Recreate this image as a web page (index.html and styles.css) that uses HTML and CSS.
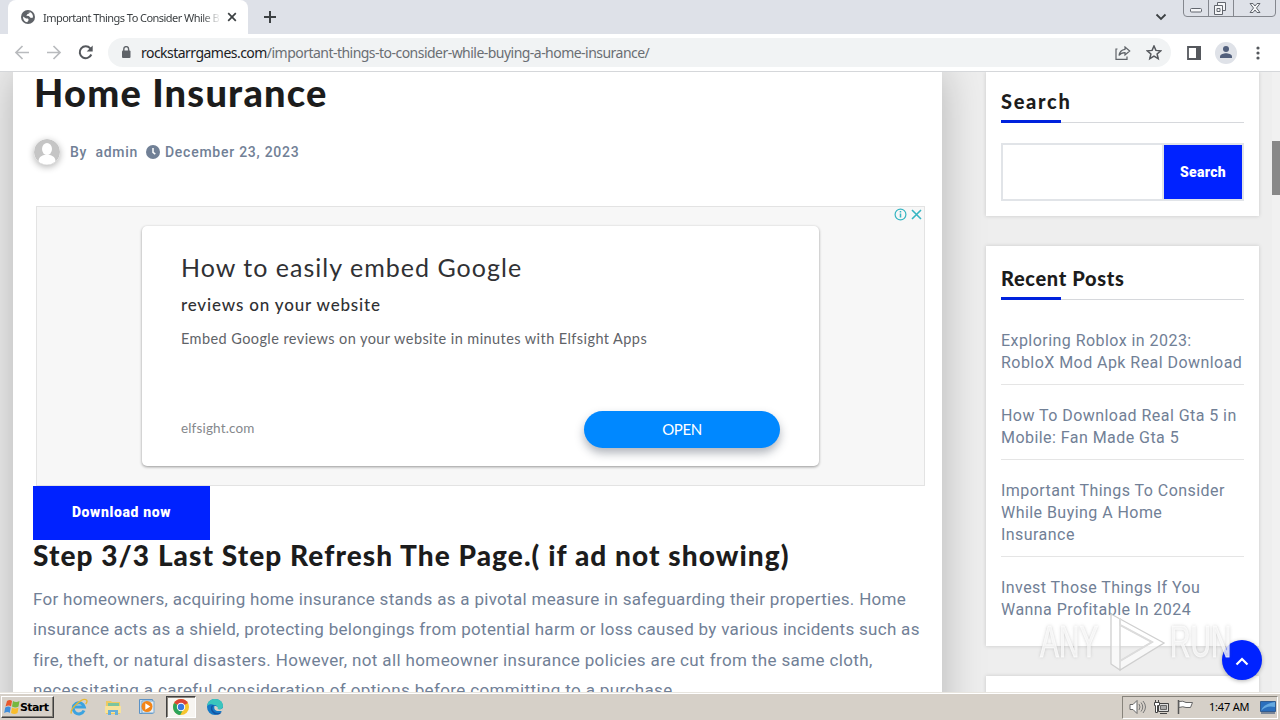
FILE: index.html
```
<!DOCTYPE html>
<html lang="en">
<head>
    <meta charset="UTF-8">
    <meta name="viewport" content="width=device-width, initial-scale=1.0">
    <title>Important Things To Consider While Buying A Home Insurance</title>
    <link rel="stylesheet" href="styles.css">
</head>
<body>
    <!-- Browser tabs -->
    <header class="tab-bar">
        <div class="tab">
            <svg class="tab-icon" width="14" height="14" viewBox="0 0 14 14"><circle cx="7" cy="7" r="7" fill="#5f6368"/><path d="M2 6.500L5 8.400h2l.7 1.700-1.500 2.200C3.700 12 1.900 10 2 6.500zM5.200 2.200l3.500-.5c.2 1.300-.8 2.100-2.200 2.300L5.300 5.700l2.500.4 2 2 2.200-.7c.3-3-1.500-5.100-3.600-5.500" fill="#fff"/></svg>
            <span class="tab-title">Important Things To Consider While B</span>
            <svg class="tab-close" width="10" height="10" viewBox="0 0 10 10"><path d="M1.200 1.200l7.600 7.600M8.800 1.200L1.200 8.800" stroke="#3c4043" stroke-width="1.700"/></svg>
        </div>
        <svg class="new-tab" width="12" height="12" viewBox="0 0 12 12"><path d="M6 0v12M0 6h12" stroke="#3c4043" stroke-width="2"/></svg>
        <svg class="tab-search" width="12" height="8" viewBox="0 0 12 8"><path d="M1.500 1.500L6 6l4.500-4.500" fill="none" stroke="#3c4043" stroke-width="1.800"/></svg>
        <svg class="window-buttons" width="94" height="18" viewBox="0 0 94 18">
            <path d="M.5 0v13q0 3.500 3.500 3.500h85q3.500 0 3.500-3.500V0M25.500 0v16M50.500 0v16" fill="none" stroke="#84878e"/>
            <g fill="#f5f6f8" stroke="#62666e">
                <rect x="7.500" y="8.500" width="11" height="3.500" rx="1"/>
                <path d="M34.500 2.500h8v8h-8z"/>
                <path d="M31.500 5.500h8v9h-8zM34 8.500h3v3h-3z"/>
                <path d="M67 3.500h3l2 2.500 2-2.500h3L73.500 8l3.500 4.500h-3L72 10l-2 2.500h-3L70.500 8z"/>
            </g>
        </svg>
    </header>

    <!-- Address bar -->
    <nav class="toolbar">
        <svg class="nav-icon" width="16" height="16" viewBox="0 0 16 16"><path d="M15 7.500H2M8.500 1L2 7.500 8.500 14" fill="none" stroke="#b9bbbe" stroke-width="1.700"/></svg>
        <svg class="nav-icon" width="16" height="16" viewBox="0 0 16 16"><path d="M1 7.500h13M7.500 1L14 7.500 7.500 14" fill="none" stroke="#b9bbbe" stroke-width="1.700"/></svg>
        <svg class="nav-icon" width="16" height="16" viewBox="0 0 16 16"><path d="M13.300 9.500A6 6 0 1 1 12.300 3.300L13.500 4.500" fill="none" stroke="#55585d" stroke-width="2"/><path d="M14.700.5v6H8.700z" fill="#55585d"/></svg>
        <div class="address">
            <svg width="10" height="13" viewBox="0 0 10 13"><rect x="1" y="4.500" width="8.500" height="7.500" rx="1" fill="#5f6368"/><path d="M2.800 5V3a2.400 2.400 0 0 1 4.800 0v2" fill="none" stroke="#5f6368" stroke-width="1.400"/></svg>
            <span class="url"><b>rockstarrgames.com</b>/important-things-to-consider-while-buying-a-home-insurance/</span>
            <svg class="share" width="16" height="14" viewBox="0 0 16 14"><path d="M2.500 3H1v10.300h11V10.500" fill="none" stroke="#5f6368" stroke-width="1.200"/><path d="M10 1l4.700 4L10 9V6.600C7 6.600 5.200 7.600 4 9.500 4.500 6 6.500 3.700 10 3.300z" fill="none" stroke="#5f6368" stroke-width="1.200"/></svg>
            <svg width="16" height="16" viewBox="0 0 16 16"><path d="M8 1l1.900 4.400 4.800.4-3.600 3.200 1.100 4.700L8 11.200l-4.200 2.500L4.900 9 1.300 5.800l4.800-.4z" fill="none" stroke="#55585d" stroke-width="1.500"/></svg>
        </div>
        <svg class="panel-icon" width="14" height="14" viewBox="0 0 14 14"><path d="M1 1h12v12H1z" fill="#fff" stroke="#55585d" stroke-width="1.800"/><path d="M9 0h5v14H9z" fill="#55585d"/></svg>
        <svg class="profile" width="22" height="22" viewBox="0 0 22 22"><circle cx="11" cy="11" r="11" fill="#dfe2e8"/><circle cx="11" cy="7" r="3" fill="#515f7c"/><path d="M5 16v-1.500c0-2.300 4-3.300 6-3.300s6 1 6 3.300V16z" fill="#515f7c"/></svg>
        <svg class="menu-icon" width="4" height="14" viewBox="0 0 4 14"><g fill="#55585d"><circle cx="2" cy="2" r="1.600"/><circle cx="2" cy="7" r="1.600"/><circle cx="2" cy="12" r="1.600"/></g></svg>
    </nav>

    <!-- Page content -->
    <main class="page">
        <article class="post">
            <h1 class="post-title">Home Insurance</h1>
            <div class="post-meta">
                <svg class="avatar" width="26" height="26" viewBox="0 0 26 26"><circle cx="13" cy="13" r="13" fill="#c5c5c5"/><ellipse cx="13" cy="10" rx="5" ry="6" fill="#fff"/><path d="M4.500 22.500c0-5 4.500-7 8.500-7s8.500 2 8.500 7a13 13 0 0 1-17 0z" fill="#fff"/></svg>
                <span class="author">By&nbsp; admin</span>
                <svg class="clock" width="14" height="14" viewBox="0 0 14 14"><circle cx="7" cy="7" r="7" fill="#718096"/><path d="M7 3v4.300l2.300 1.800" fill="none" stroke="#fff" stroke-width="1.500"/></svg>
                <span class="date">December 23, 2023</span>
            </div>

            <section class="ad">
                <div class="ad-choices">
                    <svg width="13" height="13" viewBox="0 0 13 13"><circle cx="6.500" cy="6.500" r="5.400" fill="none" stroke="#36b5c2" stroke-width="1.200"/><path d="M6.500 5.500v4M6.500 3v1.500" stroke="#36b5c2" stroke-width="1.500"/></svg>
                    <svg width="11" height="11" viewBox="0 0 11 11"><path d="M1 1l9 9M10 1l-9 9" stroke="#36b5c2" stroke-width="1.600"/></svg>
                </div>
                <div class="ad-card">
                    <div class="ad-title">How to easily embed Google</div>
                    <div class="ad-subtitle">reviews on your website</div>
                    <div class="ad-text">Embed Google reviews on your website in minutes with Elfsight Apps</div>
                    <div class="ad-footer">
                        <span class="ad-domain">elfsight.com</span>
                        <button class="ad-open">OPEN</button>
                    </div>
                </div>
            </section>

            <button class="download">Download now</button>
            <h2 class="step-title">Step 3/3 Last Step Refresh The Page.( if ad not showing)</h2>
            <p class="post-text">For homeowners, acquiring home insurance stands as a pivotal measure in safeguarding their properties. Home<br>
            insurance acts as a shield, protecting belongings from potential harm or loss caused by various incidents such as<br>
            <span class="loose">fire, theft, or natural disasters. However, not all homeowner insurance policies are cut from the same cloth,<br>
            necessitating a careful consideration of options before committing to a purchase.</span></p>
        </article>

        <aside class="sidebar">
            <section class="widget search-widget">
                <h3 class="widget-title search-title">Search</h3>
                <div class="search-form">
                    <input class="search-input" type="text">
                    <button class="search-button">Search</button>
                </div>
            </section>
            <section class="widget recent-widget">
                <h3 class="widget-title">Recent Posts</h3>
                <ul class="recent-list">
                    <li>Exploring Roblox in 2023:<br>RobloX Mod Apk Real Download</li>
                    <li>How To Download Real Gta 5 in<br>Mobile: Fan Made Gta 5</li>
                    <li>Important Things To Consider<br>While Buying A Home<br>Insurance</li>
                    <li>Invest Those Things If You<br>Wanna Profitable In 2024</li>
                </ul>
            </section>
            <section class="widget next-widget"></section>
        </aside>

        <div class="scrollbar"><div class="thumb"></div></div>
        <button class="to-top"><svg width="14" height="9" viewBox="0 0 14 9"><path d="M1.500 7.500L7 2l5.500 5.500" fill="none" stroke="#fff" stroke-width="2.200"/></svg></button>
        <div class="watermark">
            <span>ANY</span>
            <svg width="58" height="62" viewBox="0 0 58 62"><path d="M3 3v50l9 6V14l32 17-32 19v9l44-27z" fill="#fff" fill-opacity=".6" stroke="#cfcfcf" stroke-width="1.300"/><path d="M12 7v7l32 17-32 19" fill="none" stroke="#dcdcdc" stroke-width="2"/></svg>
            <span>RUN</span>
        </div>
    </main>

    <!-- Windows taskbar -->
    <footer class="taskbar">
        <button class="start">
            <svg width="16" height="16" viewBox="0 0 16 16"><path d="M3 2q3-2 5 0L7 7.500Q5 5.500 1.500 7.500z" fill="#e8582c"/><path d="M9 2q3 2 6.500 0l-1 5.500q-3 2-6.500 0z" fill="#76b83f"/><path d="M1.200 8.500q3.500-2 5.500 0l-1 5.500q-2-2-5.500 0z" fill="#3f8edb"/><path d="M8 8.500q3 2 6.500 0l-1 5.500q-3 2-6.500 0z" fill="#f8bd2c"/></svg>
            Start
        </button>
        <div class="task-icon"><svg width="18" height="18" viewBox="0 0 18 18"><path d="M14 12.500A5.600 5.600 0 1 1 14.300 9H5" fill="none" stroke="#3ba3e0" stroke-width="3"/><path d="M1.500 15.500C-1 12 12-1 16.500 2c1 1 0 3-.8 4" fill="none" stroke="#e8b830" stroke-width="1.300"/></svg></div>
        <div class="task-icon"><svg width="18" height="18" viewBox="0 0 18 18"><path d="M2 3h5l1 1h8v12H2z" fill="#edca62"/><path d="M4 5h11v4H4z" fill="#7bc49f"/><path d="M1 8h16v7H1z" fill="#f7e29a"/><path d="M4 17v-5h10v5h-3v-3H7v3z" fill="#68afd8"/></svg></div>
        <div class="task-icon"><svg width="18" height="18" viewBox="0 0 18 18"><path d="M1.500 1.500h13v14h-13z" fill="#c4dcf0" stroke="#5b92c6"/><path d="M4 3h12v12H4z" fill="#e5eef5" stroke="#79a7cd"/><circle cx="9" cy="8.500" r="5.500" fill="#f28518"/><path d="M7.300 5.300l5 3.200-5 3.200z" fill="#fff"/></svg></div>
        <div class="task-icon active"><svg width="18" height="18" viewBox="0 0 18 18"><circle cx="9" cy="9" r="8" fill="#f6c52e"/><path d="M9 9L2.100 5A8 8 0 0 1 15.900 5z" fill="#dc4437"/><path d="M9 9L2.100 5A8 8 0 0 0 8.200 17l3.500-6.500z" fill="#2da45a"/><circle cx="9" cy="9" r="4.200" fill="#fff"/><circle cx="9" cy="9" r="3.200" fill="#3978e0"/></svg></div>
        <div class="task-icon"><svg width="18" height="18" viewBox="0 0 18 18"><circle cx="9" cy="9" r="8" fill="#1579c6"/><path d="M1 8C2 3 5 1 9 1c5 0 8 3 8 7 0 3-3 4-6 3 1-2 0-4-3-4-2-1-5-1-7 1z" fill="#3ac5bd"/><path d="M8 7c-3 2-2 7 3 8 2 .3 4-.3 5-1l-2 2C9 18 4 14 5 9c.5-1.500 2-2 3-2z" fill="#1353a2"/><path d="M8.500 8c-1 3 1 5 4 5h4l1-4c-1 2-3 3-6 2 1-1 0-3-3-3z" fill="#d8d2c8"/></svg></div>
        <div class="tray">
            <svg width="17" height="16" viewBox="0 0 17 16"><path d="M1 5.500h3l4-4v13l-4-4H1z" fill="#fff" stroke="#666"/><path d="M10 5q2 3 0 6M12 3.500q3.500 4.500 0 9M14 2q5 6 0 12" fill="none" stroke="#777"/></svg>
            <svg width="17" height="16" viewBox="0 0 17 16"><path d="M5.500 4.500h10v8h-10zM7 14.500h7" fill="#ddd" stroke="#444"/><path d="M7.500 6.500h6v4h-6z" fill="#aaa" stroke="#666"/><path d="M1.500 3.500h5v3h-2v7h-2v-7h-1zM2.500 1v3M5.500 1v3" fill="#fff" stroke="#444"/></svg>
            <svg width="17" height="16" viewBox="0 0 17 16"><path d="M1.500 1v14" stroke="#555" stroke-width="1.500"/><path d="M2 2.500q4-1 7 1h6.500l-2 5H9q-3-1.500-7 0z" fill="#fff" stroke="#666"/></svg>
            <span class="time">1:47 AM</span>
            <svg class="desktop-icon" width="16" height="13" viewBox="0 0 16 13"><path d="M.5.500h15v10h-15z" fill="#2b6fbd" stroke="#315c91"/><path d="M1 10Q3 3 15 1v5Q6 4 1 10z" fill="#65a9e0"/><path d="M1 12h14" stroke="#1d3c69"/></svg>
        </div>
    </footer>
</body>
</html>
```
FILE: styles.css
```
/* styles.css */

* {
    box-sizing: border-box;
}

body {
    display: flex;
    flex-direction: column;
    width: 1280px;
    height: 720px;
    margin: 0;
    overflow: hidden;
    font-family: Roboto, sans-serif;
    white-space: nowrap;
}

svg {
    display: block;
    flex-shrink: 0;
}

button {
    border: 0;
    padding: 0;
    font-family: inherit;
}

/* Browser window */
.tab-bar {
    display: flex;
    height: 34px;
    background-color: #dee1e8;
    padding-left: 8px;
}

.tab {
    display: flex;
    align-items: center;
    width: 240px;
    padding: 0 11px 0 13px;
    background-color: #fff;
    border-radius: 8px 8px 0 0;
}

.tab-title {
    width: 178px;
    margin-left: 8px;
    overflow: hidden;
    font-family: "Noto Sans", sans-serif;
    font-size: 11px;
    letter-spacing: -0.55px;
    color: #3c4043;
    -webkit-mask-image: linear-gradient(to right, #000 158px, transparent 178px);
    mask-image: linear-gradient(to right, #000 158px, transparent 178px);
}

.tab-close {
    margin-left: auto;
}

.new-tab {
    margin: 11px 0 0 16px;
}

.tab-search {
    margin: 13px 16px 0 auto;
}

.window-buttons {
    margin-right: 3px;
}

.toolbar {
    display: flex;
    align-items: center;
    height: 38px;
    padding-left: 14px;
    background-color: #fff;
    border-bottom: 1px solid #d5d7da;
}

.nav-icon {
    margin-right: 16px;
}

.address {
    display: flex;
    align-items: center;
    width: 1063px;
    height: 29px;
    margin-left: -2px;
    padding: 0 9px 0 13px;
    background-color: #f1f3f4;
    border-radius: 15px;
}

.url {
    margin-left: 10px;
    font-family: "Noto Sans", sans-serif;
    font-size: 14px;
    letter-spacing: -0.53px;
    color: #6a6e73;
}

.url b {
    font-weight: 400;
    color: #202124;
}

.share {
    margin: 0 15px 0 auto;
}

.panel-icon {
    margin-left: 16px;
}

.profile {
    margin: 0 19px 0 14px;
}

/* Page */
.page {
    position: relative;
    display: flex;
    height: 620px;
    padding-left: 13px;
    overflow: hidden;
    background-color: #eee;
}

.post {
    width: 929px;
    height: 700px;
    padding: 0 17px 0 20px;
    background-color: #fff;
    box-shadow: 0 0 40px rgba(0, 0, 0, 0.25);
}

.post-title {
    height: 66px;
    margin: 0 0 0 1px;
    font-family: Lato, sans-serif;
    font-size: 38px;
    line-height: 40px;
    font-weight: 900;
    letter-spacing: 1.2px;
    color: #1c1c1c;
}

.post-meta {
    display: flex;
    align-items: center;
    height: 28px;
    padding-bottom: 1px;
    font-size: 14px;
    font-weight: 500;
    color: #718096;
}

.avatar {
    margin-left: 1px;
    border-radius: 50%;
    box-shadow: 0 2px 7px rgba(0, 0, 0, 0.3);
}

.author {
    margin-left: 10px;
    letter-spacing: 0.7px;
}

.clock {
    margin: 0 5px 0 8px;
}

.date {
    letter-spacing: 0.75px;
}

.ad {
    width: 889px;
    height: 280px;
    margin: 40px 0 0 3px;
    background-color: #f7f7f7;
    border: 1px solid #e3e3e3;
}

.ad-choices {
    display: flex;
    justify-content: flex-end;
    align-items: center;
    gap: 4px;
    height: 14px;
    padding-right: 2px;
}

.ad-card {
    width: 677px;
    height: 240px;
    margin: 5px 0 0 105px;
    padding: 24px 39px 0;
    background-color: #fff;
    border-radius: 5px;
    box-shadow: 0 1px 3px rgba(0, 0, 0, 0.4);
    font-family: Lato, sans-serif;
    color: #5f6368;
}

.ad-title {
    height: 40px;
    font-size: 25px;
    line-height: 34px;
    letter-spacing: 1.02px;
    color: #303134;
}

.ad-subtitle {
    height: 33px;
    font-size: 17px;
    line-height: 30px;
    font-weight: 500;
    letter-spacing: 0.83px;
    color: #303134;
}

.ad-text {
    height: 88px;
    font-size: 14.5px;
    line-height: 32px;
    letter-spacing: 0.42px;
}

.ad-footer {
    display: flex;
    justify-content: space-between;
    align-items: center;
}

.ad-domain {
    padding-bottom: 3px;
    font-size: 13.500px;
    letter-spacing: 0.15px;
    color: #85888c;
}

.ad-open {
    width: 196px;
    height: 37px;
    padding-bottom: 2px;
    background-color: #0088ff;
    border-radius: 19px;
    box-shadow: 0 5px 10px rgba(30, 40, 60, 0.35);
    font-family: Lato, sans-serif;
    font-size: 15px;
    letter-spacing: -0.4px;
    color: #fff;
}

.download {
    display: block;
    width: 177px;
    height: 54px;
    padding-bottom: 2px;
    background-color: #0022ff;
    font-size: 14px;
    font-weight: 900;
    letter-spacing: 0.65px;
    color: #fff;
}

.step-title {
    height: 44px;
    margin: 0;
    font-family: Lato, sans-serif;
    font-size: 28px;
    line-height: 31px;
    font-weight: 900;
    letter-spacing: 1.07px;
    color: #1c1c1c;
}

.post-text {
    margin: 0;
    font-size: 17px;
    line-height: 30.4px;
    letter-spacing: 0.3px;
    color: #718096;
}

.loose {
    letter-spacing: 0.37px;
}

/* Sidebar */
.sidebar {
    width: 273px;
    margin-left: 44px;
    position: relative;
}

.widget {
    padding: 0 15px;
    background-color: #fff;
    box-shadow: 0 0 4px rgba(0, 0, 0, 0.16);
}

.search-widget {
    height: 144px;
    padding-top: 13px;
}

.recent-widget {
    height: 400px;
    margin-top: 30px;
    padding-top: 16px;
}

.next-widget {
    height: 100px;
    margin-top: 30px;
}

.widget-title {
    height: 38px;
    margin: 0;
    background:
        linear-gradient(#0022dd, #0022dd) left bottom / 60px 3px no-repeat,
        linear-gradient(#d6d8dc, #d6d8dc) left bottom / 100% 1px no-repeat;
    font-family: Lato, sans-serif;
    font-size: 20px;
    line-height: 33px;
    font-weight: 900;
    letter-spacing: 0.65px;
    color: #1c1c1c;
}

.search-title {
    letter-spacing: 1.7px;
}

.search-form {
    display: flex;
    height: 58px;
    margin-top: 20px;
    border: 2px solid #e1e4e8;
}

.search-input {
    width: 161px;
    border: 0;
    border-right: 2px solid #e1e4e8;
}

.search-button {
    flex: 1;
    padding-bottom: 1px;
    background-color: #0022ff;
    font-size: 14px;
    font-weight: 900;
    letter-spacing: 0.3px;
    color: #fff;
}

.recent-list {
    margin: 19px 0 0;
    padding: 0;
    list-style: none;
    font-size: 16px;
    line-height: 22px;
    letter-spacing: 0.45px;
    color: #718096;
}

.recent-list li {
    padding: 11px 0 10px;
    margin-bottom: 9px;
    border-bottom: 1px solid #e5e5e5;
}

.recent-list li:last-child {
    border-bottom: 0;
}

.scrollbar {
    width: 8px;
    margin-left: 13px;
    padding-top: 69px;
    background-color: #f1f1f1;
}

.thumb {
    height: 54px;
    background-color: #888;
}

/* Floating elements */
.to-top {
    position: absolute;
    right: 18px;
    bottom: 12px;
    display: flex;
    align-items: center;
    justify-content: center;
    width: 40px;
    height: 40px;
    padding-top: 3px;
    background-color: #0022ff;
    border-radius: 50%;
    box-shadow: 0 1px 4px rgba(0, 0, 0, 0.3);
}

.watermark {
    position: absolute;
    right: 46px;
    bottom: 19px;
    display: flex;
    align-items: center;
    gap: 4px;
    font-family: "Liberation Sans", sans-serif;
    font-size: 45px;
    line-height: 62px;
    color: rgba(255, 255, 255, 0.75);
    text-shadow: 0 0 4px rgba(100, 100, 100, 0.4);
}

.watermark span {
    width: 64px;
    transform: scaleX(0.63);
    transform-origin: left;
    -webkit-text-stroke: 1px rgba(255, 255, 255, 0.7);
}

/* Taskbar */
.taskbar {
    display: flex;
    align-items: center;
    height: 28px;
    padding: 2px 2px 0 1px;
    background-color: #d6d0c8;
    box-shadow: inset 0 1px #e8e5df, inset 0 2px #fff;
}

.start {
    display: flex;
    align-items: center;
    width: 53px;
    height: 22px;
    margin-right: 10px;
    padding-left: 2px;
    background-color: #d6d0c8;
    border: 1px solid;
    border-color: #fff #404040 #404040 #fff;
    box-shadow: inset -1px -1px #87837b;
    font-family: "DejaVu Sans", sans-serif;
    font-size: 11px;
    font-weight: 700;
    letter-spacing: -0.6px;
    color: #000;
}

.task-icon {
    display: flex;
    align-items: center;
    justify-content: center;
    width: 30px;
    height: 22px;
    margin-right: 4px;
}

.active {
    background-color: #f7f5f1;
    border: 1px solid;
    border-color: #404040 #fff #fff #404040;
    box-shadow: inset 1px 1px #87837b;
}

.tray {
    display: flex;
    align-items: center;
    gap: 7px;
    width: 156px;
    height: 23px;
    margin-left: auto;
    padding-left: 6px;
    border: 1px solid;
    border-color: #87837b #fff #fff #87837b;
}

.time {
    margin-left: 8px;
    padding-bottom: 1px;
    font-family: "Noto Sans", sans-serif;
    font-size: 11px;
    letter-spacing: -0.2px;
    color: #000;
}

.desktop-icon {
    margin-left: 4px;
}
```
